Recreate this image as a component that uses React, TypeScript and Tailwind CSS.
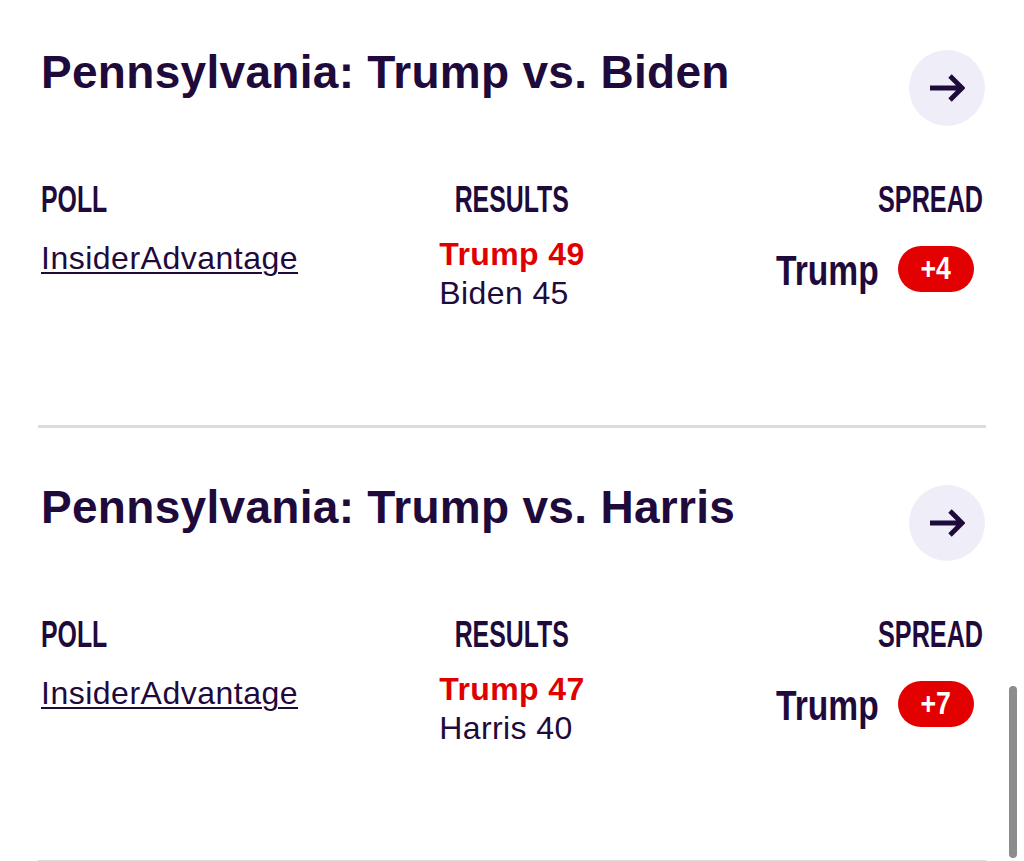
import React from "react";

const NAVY = "text-[#1f0a3c]";

function Arrow() {
  return (
    <svg width="36" height="30" viewBox="0 0 36 30" fill="none">
      <path d="M1 15 H33 M21 3 L33 15 L21 27" stroke="#1f0a3c" strokeWidth="4.8" strokeLinejoin="miter" strokeLinecap="butt" />
    </svg>
  );
}

type Poll = {
  title: string;
  winner: string;
  winnerVal: number;
  loser: string;
  loserVal: number;
  spread: string;
};

const polls: Poll[] = [
  { title: "Pennsylvania: Trump vs. Biden", winner: "Trump", winnerVal: 49, loser: "Biden", loserVal: 45, spread: "+4" },
  { title: "Pennsylvania: Trump vs. Harris", winner: "Trump", winnerVal: 47, loser: "Harris", loserVal: 40, spread: "+7" },
];

const sans = "font-['Liberation_Sans',Arial,sans-serif]";

function Section({ p }: { p: Poll }) {
  return (
    <section className={`mx-[38px] border-b-[3px] border-[#dcdcdc] px-[3px] pt-[52px] pb-[112px] ${sans}`}>
      <div className="flex items-start justify-between">
        <h2 className={`text-[46px] leading-[54px] font-bold tracking-[0.3px] ${NAVY}`}>{p.title}</h2>
        <button className="mt-[5px] -mr-[2px] flex h-[76px] w-[76px] shrink-0 items-center justify-center rounded-full bg-[#efedf8]">
          <Arrow />
        </button>
      </div>
      <div className={`mt-[54px] grid grid-cols-3 ${NAVY}`}>
        <div className="text-left">
          <span className="inline-block origin-left scale-x-[0.69] text-[36px] leading-[40px] font-bold">POLL</span>
        </div>
        <div className="text-center">
          <span className="inline-block origin-center scale-x-[0.69] text-[36px] leading-[40px] font-bold">RESULTS</span>
        </div>
        <div className="text-right">
          <span className="inline-block origin-right scale-x-[0.7] text-[36px] leading-[40px] font-bold">SPREAD</span>
        </div>
      </div>
      <div className={`mt-[15px] grid grid-cols-3 ${NAVY}`}>
        <div className="pt-[4px]">
          <a className="text-[32px] leading-[39px] tracking-[0.5px] underline decoration-[2px] underline-offset-[3px]">InsiderAdvantage</a>
        </div>
        <div className="text-center">
          <div className="inline-block text-left text-[32px] leading-[39px] tracking-[0.4px]">
            <div className="font-bold text-[#e00000]">
              {p.winner} {p.winnerVal}
            </div>
            <div>
              {p.loser} {p.loserVal}
            </div>
          </div>
        </div>
        <div className="flex items-start justify-end pr-[9px] pt-[9px]">
          <div className="flex items-center gap-[17px]">
            <span className="block w-[105px] pt-[4px] text-[42px] leading-[46px] font-bold whitespace-nowrap">
              <span className="inline-block origin-left scale-x-[0.8]">{p.winner}</span>
            </span>
            <span className="flex h-[46px] w-[76px] items-center justify-center rounded-full bg-[#e30000] text-[31px] leading-[46px] font-bold text-white">
              <span className="inline-block scale-x-[0.86]">{p.spread}</span>
            </span>
          </div>
        </div>
      </div>
    </section>
  );
}

export default function App() {
  return (
    <div className="relative h-[861px] w-[1024px] overflow-hidden bg-white">
      <div className="-mt-[7px]">
        {polls.map((p) => (
          <Section key={p.title} p={p} />
        ))}
      </div>
      <div className="absolute right-[7px] top-[686px] h-[172px] w-[8px] rounded-full bg-[#8c8c8c]" />
    </div>
  );
}
